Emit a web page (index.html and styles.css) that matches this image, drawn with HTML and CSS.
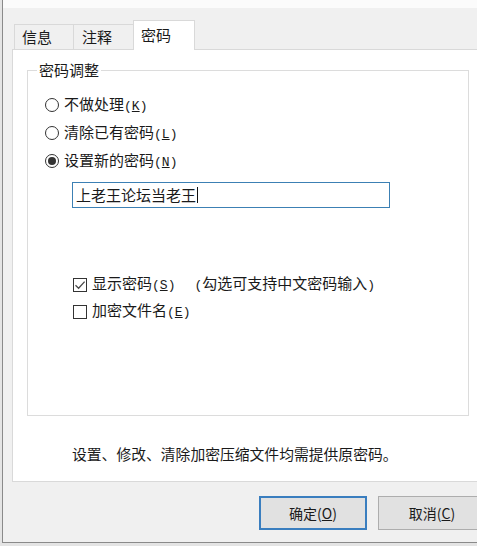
FILE: index.html
```html
<!DOCTYPE html>
<html lang="zh-CN">
<head>
<meta charset="utf-8">
<title>密码</title>
<link rel="stylesheet" href="styles.css">
</head>
<body>
<div class="screen">
  <div class="window">
    <div class="topstrip"></div>
    <div class="content">
      <div class="tabs">
        <div class="tab tab-info">信息</div>
        <div class="tab tab-note">注释</div>
        <div class="tab tab-pass active">密码</div>
      </div>
      <div class="panel">
        <fieldset class="group">
          <legend class="legend">密码调整</legend>
          <div class="radio-row first">
            <span class="radio"></span>
            <span class="label">不做处理<span class="key">(<u>K</u>)</span></span>
          </div>
          <div class="radio-row">
            <span class="radio"></span>
            <span class="label">清除已有密码<span class="key">(<u>L</u>)</span></span>
          </div>
          <div class="radio-row">
            <span class="radio checked"></span>
            <span class="label">设置新的密码<span class="key">(<u>N</u>)</span></span>
          </div>
          <div class="field">上老王论坛当老王<span class="caret"></span></div>
          <div class="check-row first">
            <span class="checkbox">
              <svg width="12" height="12" viewBox="0 0 12 12"><path d="M1.5 6.2 L4.6 9.2 L10.6 2.6" fill="none" stroke="#4a4a4a" stroke-width="1.3"/></svg>
            </span>
            <span class="label">显示密码<span class="key">(<u>S</u>)</span></span>
            <span class="hint"><span class="key">(</span>勾选可支持中文密码输入<span class="key">)</span></span>
          </div>
          <div class="check-row">
            <span class="checkbox"></span>
            <span class="label">加密文件名<span class="key">(<u>E</u>)</span></span>
          </div>
        </fieldset>
        <p class="note">设置、修改、清除加密压缩文件均需提供原密码。</p>
      </div>
      <div class="buttons">
        <button class="btn default">确定(<u>O</u>)</button>
        <button class="btn">取消(<u>C</u>)</button>
      </div>
    </div>
  </div>
</div>
</body>
</html>
```

FILE: styles.css
```css
* {
  box-sizing: border-box;
}

html, body {
  margin: 0;
  padding: 0;
}

body {
  font-family: "Noto Sans CJK SC", "Noto Sans", sans-serif;
  font-size: 15px;
  color: #1a1a1a;
  background: #e6e6e6;
}

.screen {
  width: 477px;
  height: 546px;
  overflow: hidden;
  padding-left: 2px;
  background: #e4e4e4;
}

.window {
  height: 543px;
  background: #f0f0f0;
  border-left: 1px solid #8a8a8a;
  border-bottom: 1px solid #8a8a8a;
  overflow: hidden;
}

.topstrip {
  height: 8px;
  background: #fbfbfb;
}

.content {
  padding-left: 9px;
}

.tabs {
  display: flex;
  align-items: flex-end;
  height: 30px;
  margin-top: 11px;
  padding-left: 2px;
}

.tab {
  height: 25px;
  line-height: 24px;
  background: #f0f0f0;
  border-top: 1px solid #d9d9d9;
  border-left: 1px solid #d9d9d9;
}

.tab-info {
  width: 59px;
  padding-left: 7px;
}

.tab-note {
  width: 60px;
  padding-left: 8px;
}

.tab-pass {
  width: 62px;
  padding-left: 7px;
}

.tab.active {
  position: relative;
  z-index: 1;
  height: 30px;
  line-height: 28px;
  background: #ffffff;
  border-right: 1px solid #d9d9d9;
  margin-bottom: -1px;
}

.panel {
  width: 490px;
  height: 433px;
  background: #ffffff;
  border: 1px solid #d9d9d9;
  padding: 10px 0 0 14px;
}

.group {
  width: 442px;
  height: 356px;
  margin: 0;
  padding: 0 0 0 17px;
  border: 1px solid #dcdcdc;
}

.legend {
  margin-left: -8px;
  padding: 0 2px;
  line-height: 20px;
}

.radio-row,
.check-row {
  display: flex;
  align-items: center;
  height: 28px;
}

.radio-row.first {
  margin-top: 11px;
}

.radio {
  width: 14px;
  height: 14px;
  border: 1px solid #333333;
  border-radius: 50%;
  margin-right: 5px;
  display: flex;
  align-items: center;
  justify-content: center;
  background: #ffffff;
}

.radio.checked::after {
  content: "";
  width: 8px;
  height: 8px;
  border-radius: 50%;
  background: #333333;
}

.label {
  line-height: 20px;
}

.key {
  font-family: "Liberation Mono", "DejaVu Sans Mono", monospace;
  font-size: 13px;
}

.field {
  width: 318px;
  height: 26px;
  margin: 7px 0 0 27px;
  border: 1px solid #3c80b4;
  padding-left: 3px;
  line-height: 24px;
  display: flex;
  align-items: center;
}

.caret {
  width: 1px;
  height: 16px;
  background: #111111;
  margin-left: 1px;
}

.check-row {
  height: 27px;
  padding-left: 28px;
}

.check-row.first {
  margin-top: 63px;
}

.checkbox {
  width: 14px;
  height: 14px;
  border: 1px solid #333333;
  margin-right: 5px;
  display: flex;
  align-items: center;
  justify-content: center;
  background: #ffffff;
}

.hint {
  margin-left: 19px;
  line-height: 20px;
}

.note {
  margin: 28px 0 0 45px;
  line-height: 20px;
  font-size: 14.8px;
}

.buttons {
  display: flex;
  gap: 11px;
  margin-top: 14px;
  padding-left: 247px;
}

.btn {
  flex: none;
  width: 108px;
  height: 34px;
  font-family: "Noto Sans CJK SC", "Noto Sans", sans-serif;
  font-size: 14px;
  color: #1a1a1a;
  background: #e1e1e1;
  border: 1px solid #adadad;
  padding: 0;
}

.btn.default {
  border: 2px solid #3a7ebf;
}
```
